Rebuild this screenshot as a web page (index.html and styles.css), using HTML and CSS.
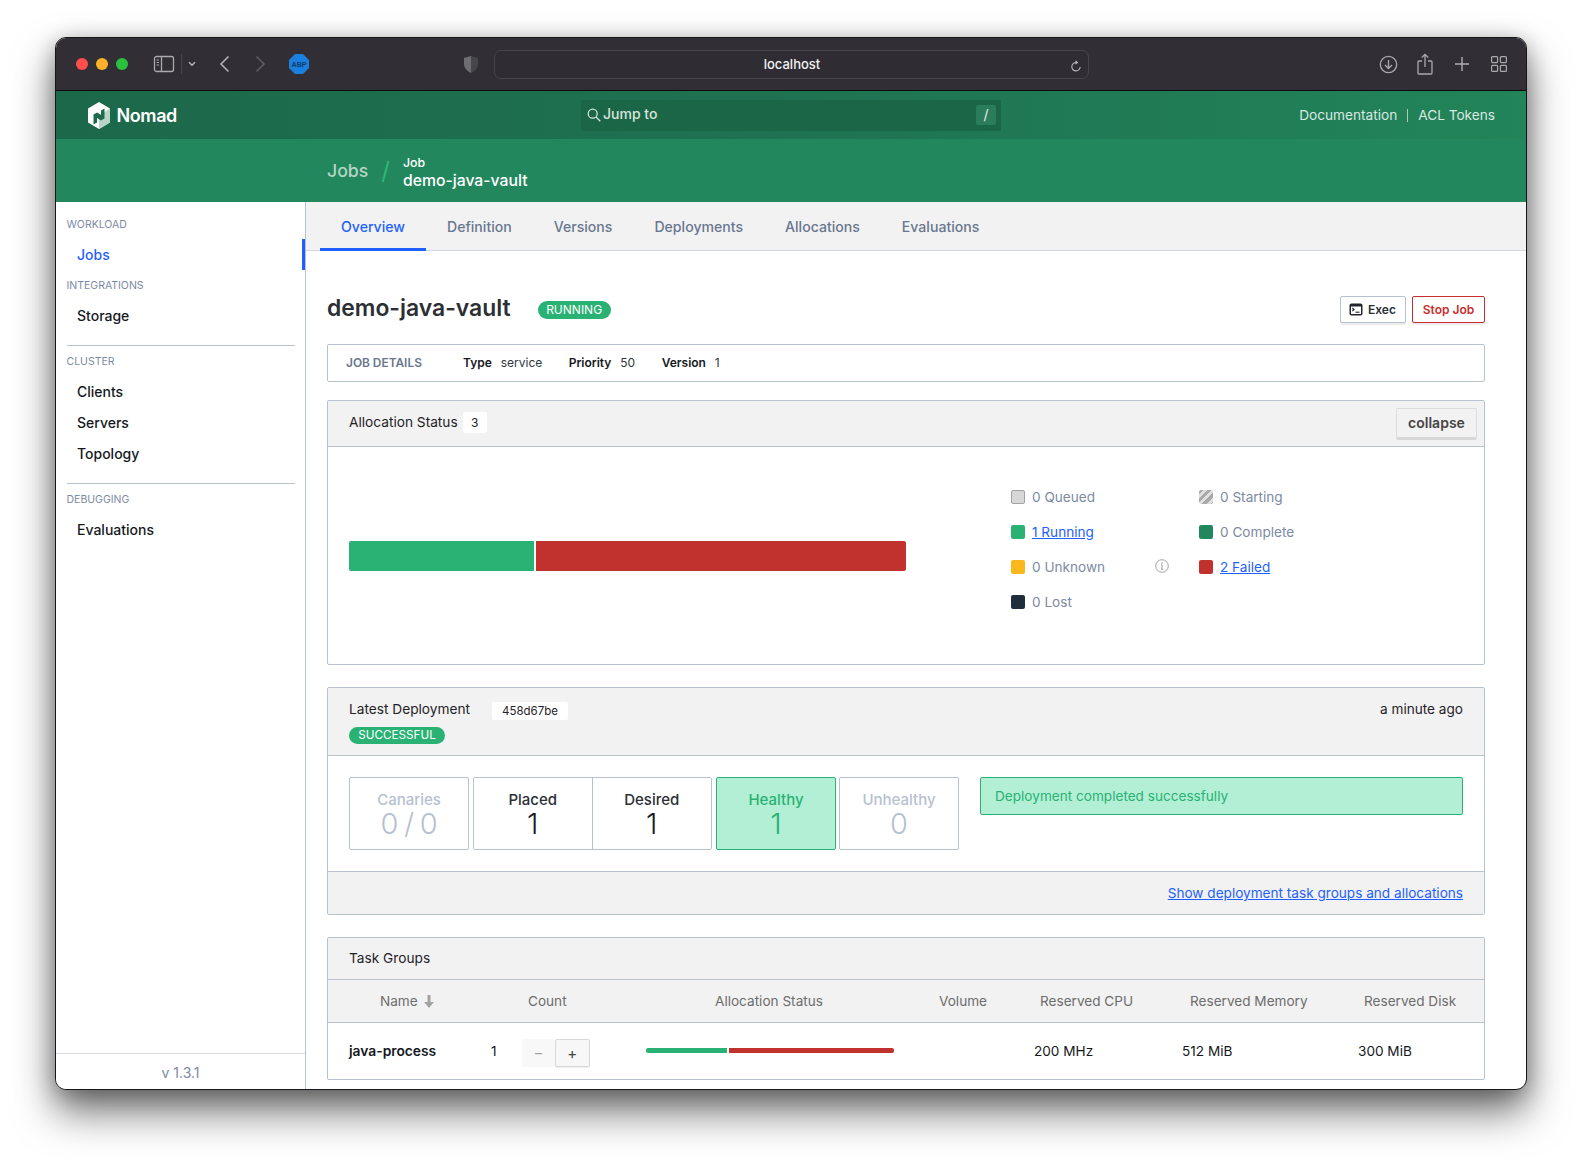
FILE: index.html
```html
<!DOCTYPE html>
<html lang="en">
<head>
<meta charset="utf-8">
<title>demo-java-vault - Nomad</title>
<link rel="stylesheet" href="styles.css">
</head>
<body>
<div class="window">
  <header class="toolbar">
    <span class="light red"></span><span class="light amber"></span><span class="light green"></span>
    <svg class="ic ic-side" width="22" height="18" viewBox="0 0 22 18" fill="none" stroke="#a9a9ad" stroke-width="1.3"><rect x="1.5" y="1.5" width="19" height="15" rx="2"/><path d="M8.5 1.5v15"/><path d="M3.6 5h2.4M3.6 7.5h2.4M3.6 10h2.4" stroke-width="1"/></svg>
    <span class="tb-sep"></span>
    <svg class="ic ic-chev" width="8" height="6" viewBox="0 0 8 6" fill="none" stroke="#b5b5b8" stroke-width="1.5"><path d="M1 1.2l3 3 3-3"/></svg>
    <svg class="ic ic-back" width="11" height="18" viewBox="0 0 11 18" fill="none" stroke="#b0b0b3" stroke-width="1.6"><path d="M9.5 1.5L2 9l7.5 7.5"/></svg>
    <svg class="ic ic-fwd" width="11" height="18" viewBox="0 0 11 18" fill="none" stroke="#5c5c60" stroke-width="1.6"><path d="M1.5 1.5L9 9l-7.5 7.5"/></svg>
    <svg class="ic ic-abp" width="20" height="20" viewBox="0 0 20 20"><path d="M6 0h8l6 6v8l-6 6H6l-6-6V6z" fill="#1b7fe0"/><text x="10" y="13" text-anchor="middle" class="abp">ABP</text></svg>
    <svg class="ic ic-shield" width="14" height="17" viewBox="0 0 14 17"><path d="M7 0l7 2v6c0 4-3 7-7 9-4-2-7-5-7-9V2z" fill="#46464b"/><path d="M7 0v17c-4-2-7-5-7-9V2z" fill="#6d6d72"/></svg>
    <div class="addr">
      <span class="addr-text">localhost</span>
      <svg class="reload" width="12" height="13" viewBox="0 0 12 13" fill="none" stroke="#bdbdc0" stroke-width="1.1"><path d="M6.6 2.5A4.2 4.2 0 1 0 10.2 7"/><path d="M5.6.8l1.8 1.7-1.8 1.7" /></svg>
    </div>
    <svg class="ic ic-dl" width="19" height="19" viewBox="0 0 19 19" fill="none" stroke="#a9a9ad" stroke-width="1.3"><circle cx="9.5" cy="9.5" r="8.2"/><path d="M9.5 5v8.5M6 10l3.5 3.5L13 10"/></svg>
    <svg class="ic ic-share" width="16" height="22" viewBox="0 0 16 22" fill="none" stroke="#a9a9ad" stroke-width="1.3"><path d="M5 8H2a1 1 0 0 0-1 1v11a1 1 0 0 0 1 1h12a1 1 0 0 0 1-1V9a1 1 0 0 0-1-1h-3"/><path d="M8 14V1.500M4.800 4.500L8 1.300l3.200 3.200"/></svg>
    <svg class="ic ic-plus" width="14" height="14" viewBox="0 0 14 14" fill="none" stroke="#b0b0b3" stroke-width="1.4"><path d="M7 0v14M0 7h14"/></svg>
    <svg class="ic ic-tabs" width="16" height="16" viewBox="0 0 16 16" fill="none" stroke="#a9a9ad" stroke-width="1.2"><rect x=".6" y=".6" width="6" height="6" rx="1"/><rect x="9.400" y=".6" width="6" height="6" rx="1"/><rect x=".6" y="9.400" width="6" height="6" rx="1"/><rect x="9.400" y="9.400" width="6" height="6" rx="1"/></svg>
  </header>

  <nav class="gnav">
    <svg class="logo" width="24" height="27" viewBox="0 0 24 27"><path d="M12 0l11 6.500v14L12 27 1 20.500v-14z" fill="#fff"/><path d="M12 13.500l11-7v14L12 27z" fill="#b7d5c6"/><path d="M6.500 12.500l3.700-2.100 3.800 2.600V8.500l3.500-2v10l-3.600 2.100-3.800-2.700v4.600l-3.600 2z" fill="#1d6a4b"/></svg>
    <span class="brand">Nomad</span>
    <div class="search">
      <svg width="14" height="14" viewBox="0 0 14 14" fill="none" stroke="#d3e2da" stroke-width="1.300"><circle cx="5.700" cy="5.700" r="4.500"/><path d="M9 9l4.300 4.300"/></svg>
      <span class="search-text">Jump to</span>
      <span class="key">/</span>
    </div>
    <div class="gnav-links">
      <a class="gnav-link">Documentation</a>
      <a class="gnav-link gnav-link-last">ACL Tokens</a>
    </div>
  </nav>

  <div class="subnav">
    <span class="crumb-root">Jobs</span>
    <span class="crumb-sep">/</span>
    <div class="crumb-job">
      <span class="crumb-label">Job</span>
      <span class="crumb-name">demo-java-vault</span>
    </div>
  </div>

  <div class="body">
    <aside class="sidebar">
      <div class="side-top">
        <p class="side-label side-label-first">WORKLOAD</p>
        <a class="side-item active">Jobs</a>
        <p class="side-label">INTEGRATIONS</p>
        <a class="side-item">Storage</a>
        <hr class="side-rule">
        <p class="side-label">CLUSTER</p>
        <a class="side-item">Clients</a>
        <a class="side-item">Servers</a>
        <a class="side-item">Topology</a>
        <hr class="side-rule">
        <p class="side-label">DEBUGGING</p>
        <a class="side-item">Evaluations</a>
      </div>
      <div class="version">v 1.3.1</div>
    </aside>

    <main class="main">
      <div class="tabs">
        <a class="tab tab-active">Overview</a>
        <a class="tab">Definition</a>
        <a class="tab">Versions</a>
        <a class="tab">Deployments</a>
        <a class="tab">Allocations</a>
        <a class="tab">Evaluations</a>
      </div>
      <section class="content">
        <div class="title-row">
          <h1 class="title">demo-java-vault</h1>
          <span class="pill pill-running">RUNNING</span>
          <div class="actions">
            <button class="btn btn-exec">
              <svg width="14" height="13" viewBox="0 0 14 13"><rect x=".5" y=".5" width="13" height="12" rx="2" fill="#22262c"/><rect x="2" y="3.500" width="10" height="7.500" fill="#fff"/><path d="M3.300 5l1.800 1.500-1.800 1.500" fill="none" stroke="#22262c" stroke-width="1.100"/><path d="M6.500 9.200h4" stroke="#22262c" stroke-width="1.100"/></svg>
              Exec
            </button>
            <button class="btn btn-stop">Stop Job</button>
          </div>
        </div>

        <div class="details">
          <span class="details-head">JOB DETAILS</span>
          <span class="pair"><b>Type</b> service</span>
          <span class="pair"><b>Priority</b> 50</span>
          <span class="pair"><b>Version</b> 1</span>
        </div>

        <div class="box box-alloc">
          <div class="box-head head-alloc">
            <span class="head-text">Allocation Status</span>
            <span class="chip chip-count">3</span>
            <button class="collapse">collapse</button>
          </div>
          <div class="alloc-body">
            <div class="bar">
              <span class="bar-seg seg-run"></span>
              <span class="bar-seg seg-fail"></span>
            </div>
            <div class="legend">
              <div class="lg"><i class="sw sw-queued"></i>0 Queued</div>
              <div class="lg"><i class="sw sw-start"></i>0 Starting</div>
              <div class="lg"><i class="sw sw-run"></i><a class="link">1 Running</a></div>
              <div class="lg"><i class="sw sw-comp"></i>0 Complete</div>
              <div class="lg lg-info"><i class="sw sw-unk"></i>0 Unknown
                <svg class="info" width="14" height="14" viewBox="0 0 14 14" fill="none" stroke="#a3a3a3"><circle cx="7" cy="7" r="6.300"/><path d="M7 6v4.200M5.800 10.300h2.400M6 6h1" /><path d="M7 3.500v1.200" stroke-width="1.400"/></svg>
              </div>
              <div class="lg"><i class="sw sw-fail"></i><a class="link">2 Failed</a></div>
              <div class="lg"><i class="sw sw-lost"></i>0 Lost</div>
            </div>
          </div>
        </div>

        <div class="box box-deploy">
          <div class="box-head head-deploy">
            <div class="deploy-line">
              <span class="head-title">Latest Deployment</span>
              <span class="chip chip-hash">458d67be</span>
              <span class="ago">a minute ago</span>
            </div>
            <span class="pill pill-success">SUCCESSFUL</span>
          </div>
          <div class="deploy-body">
            <div class="stat stat-muted"><span class="stat-k">Canaries</span><span class="stat-v stat-v-pair">0 / 0</span></div>
            <div class="stat-group">
              <div class="stat stat-inner"><span class="stat-k">Placed</span><span class="stat-v">1</span></div>
              <div class="stat stat-inner stat-inner-last"><span class="stat-k">Desired</span><span class="stat-v">1</span></div>
            </div>
            <div class="stat stat-ok"><span class="stat-k">Healthy</span><span class="stat-v">1</span></div>
            <div class="stat stat-muted"><span class="stat-k">Unhealthy</span><span class="stat-v">0</span></div>
            <div class="notice">Deployment completed successfully</div>
          </div>
          <div class="deploy-foot"><a class="link">Show deployment task groups and allocations</a></div>
        </div>

        <div class="box box-tasks">
          <div class="box-head head-tasks">Task Groups</div>
          <div class="thead">
            <span class="th-name">Name
              <svg width="10" height="13" viewBox="0 0 10 13"><path d="M3.500 0h3v7H10l-5 6-5-6h3.500z" fill="#a3a3a3"/></svg>
            </span>
            <span>Count</span>
            <span>Allocation Status</span>
            <span>Volume</span>
            <span>Reserved CPU</span>
            <span>Reserved Memory</span>
            <span>Reserved Disk</span>
          </div>
          <div class="trow">
            <b class="td-name">java-process</b>
            <span>1</span>
            <div class="stepper"><span class="step step-off">−</span><span class="step step-on">+</span></div>
            <div class="mini"><span class="mini-seg seg-run"></span><span class="mini-seg seg-fail"></span></div>
            <span>200 MHz</span>
            <span>512 MiB</span>
            <span>300 MiB</span>
          </div>
        </div>
      </section>
    </main>
  </div>
</div>
</body>
</html>
```
FILE: styles.css
```css
* { box-sizing: border-box; }
html, body { margin: 0; padding: 0; height: 1163px; overflow: hidden; background: #fff; }
body { font-family: Inter, "Liberation Sans", sans-serif; font-size: 13.6px; color: #1f2328; }

.window {
  width: 1472px; height: 1053px; margin: 37px 0 0 55px;
  border: 1px solid #16161a; border-radius: 11px; overflow: hidden; background: #fff;
  display: flex; flex-direction: column;
  box-shadow: 0 22px 40px rgba(0,0,0,.55), 0 4px 22px rgba(0,0,0,.28);
}

.toolbar {
  height: 53px; flex: none; background: #312f35; border-bottom: 1px solid #0c0c0e;
  display: flex; align-items: center; padding-left: 20px;
}
.light { width: 12px; height: 12px; border-radius: 50%; margin-right: 8px; }
.light.red { background: #ff4f4c; }
.light.amber { background: #fdb02a; }
.light.green { background: #2ac23c; }
.ic { flex: none; }
.ic-side { margin-left: 17px; }
.tb-sep { width: 1px; height: 20px; background: #48484c; margin-left: 6px; }
.ic-chev { margin-left: 6px; }
.ic-back { margin-left: 23px; }
.ic-fwd { margin-left: 25px; }
.ic-abp { margin-left: 23px; }
.abp { font: 700 7px "Liberation Sans", sans-serif; fill: #123a66; }
.ic-shield { margin-left: 155px; }
.addr {
  width: 595px; height: 29px; margin-left: 16px; border: 1px solid #47474b; border-radius: 7px;
  display: flex; align-items: center; justify-content: center; position: relative; background: #2f2d33;
}
.addr-text { color: #f1f1f2; font-size: 13px; font-weight: 500; margin-left: 1px; }
.reload { position: absolute; right: 6px; top: 9px; }
.ic-dl { margin-left: 290px; }
.ic-share { margin-left: 19px; }
.ic-plus { margin-left: 22px; }
.ic-tabs { margin-left: 22px; }

.gnav {
  height: 48px; flex: none; display: flex; align-items: center; padding-left: 30.500px;
  background: linear-gradient(90deg, #1c684a 0%, #1e7151 45%, #228459 100%);
}
.logo { flex: none; }
.brand { color: #fff; font-size: 18px; font-weight: 600; margin-left: 6px; width: 464.500px; letter-spacing: -.4px; }
.search {
  width: 420px; height: 31px; background: #1b6647; display: flex; align-items: center;
  padding: 0 5px 0 6px; color: #d7e5de;
}
.search-text { font-size: 14px; font-weight: 500; margin: 0 0 3px 2px; flex: 1; }
.key { width: 20px; height: 20px; background: #2a7c5b; color: #e6efea; font-size: 14px; text-align: center; line-height: 20px; border-radius: 2px; }
.gnav-links { margin-left: auto; padding-right: 31px; display: flex; align-items: center; }
.gnav-link { color: #d9e8e0; font-size: 13.650px; padding-right: 10px; border-right: 1px solid #a8cbb9; line-height: 13px; }
.gnav-link-last { border: 0; padding: 0 0 0 10px; }

.subnav {
  height: 63px; flex: none; background: #22875d; display: flex; align-items: center; padding-left: 271px; color: #fff;
}
.crumb-root { color: #b5d6c5; font-size: 17.700px; font-weight: 500; }
.crumb-sep { color: #2cb878; font-size: 24px; margin: 0 13px; }
.crumb-job { display: flex; flex-direction: column; padding-top: 5px; }
.crumb-label { font-size: 12.300px; font-weight: 500; line-height: 15px; }
.crumb-name { font-size: 15.750px; font-weight: 500; line-height: 21px; }

.body { flex: 1; display: flex; min-height: 0; }
.sidebar {
  width: 250px; flex: none; border-right: 1px solid #b8c1cf; display: flex; flex-direction: column; background: #fff;
}
.side-top { flex: 1; padding-left: 10.500px; }
.side-label { margin: 8px 0 0; color: #7c8ba3; font-size: 10.500px; height: 15px; line-height: 15px; }
.side-label-first { margin-top: 15px; }
.side-item { display: block; height: 31px; line-height: 31px; padding-left: 10.500px; font-size: 14px; font-weight: 500; color: #15191e; }
.side-label + .side-item { margin-top: 7px; }
.side-item.active { color: #1f5fff; position: relative; }
.side-item.active::after { content: ""; position: absolute; right: 0; top: 0; width: 3px; height: 31px; background: #1f5fff; }
.side-rule { border: 0; border-top: 1px solid #b8c1cf; height: 0; margin: 14px 10px 0 0; }
.version { height: 36px; border-top: 1px solid #d8dae3; text-align: center; color: #7c8ba3; font-size: 14px; line-height: 37px; }

.main { flex: 1; min-width: 0; display: flex; flex-direction: column; }
.tabs { height: 49px; flex: none; background: #f2f2f2; border-bottom: 1px solid #d2d6dd; display: flex; padding-left: 14px; }
.tab { height: 49px; padding: 0 21px; line-height: 49px; color: #69778f; font-size: 14.100px; font-weight: 500; }
.tab-active { color: #1f5fff; border-bottom: 3px solid #1f5fff; }

.content { padding: 0 41px 0 21px; }
.title-row { height: 93px; display: flex; align-items: center; padding-top: 20px; }
.title { margin: 0; font-size: 22.900px; font-weight: 600; color: #2c2f33; line-height: 30px; }
.pill { display: inline-block; border-radius: 10px; color: #fff; font-size: 12px; background: #29b273; }
.pill-running { margin: 4px 0 0 27px; padding: 0 8.500px; height: 18px; line-height: 18px; }
.actions { margin: 4px 0 0 auto; display: flex; gap: 6px; }
.btn {
  height: 27px; background: #fff; font: 600 12px Inter, sans-serif; border-radius: 2px; display: flex; align-items: center; padding: 0 8px;
  box-shadow: 0 2px 0 rgba(0,0,0,.08);
}
.btn-exec { width: 66px; border: 1px solid #b8c1cf; color: #2a2f36; gap: 5px; }
.btn-stop { width: 73px; border: 1px solid #c62f2e; color: #c62f2e; justify-content: center; padding: 0; }

.details {
  height: 38px; border: 1px solid #b8c1cf; border-radius: 2px; display: flex; align-items: center; padding: 0 0 1px 18px; font-size: 12px; color: #2f353c;
}
.details-head { color: #69778f; font-weight: 600; width: 117px; font-size: 11.900px; }
.pair { margin-right: 26.500px; }
.pair b { font-weight: 600; margin-right: 5.500px; color: #15191e; }

.box { border: 1px solid #b8c1cf; border-radius: 2px; overflow: hidden; }
.box-head { background: #f2f2f2; border-bottom: 1px solid #b8c1cf; padding-left: 21px; }
.box-alloc { margin-top: 18px; height: 265px; }
.head-alloc { height: 46px; display: flex; align-items: center; padding-right: 7px; }
.head-text { margin-bottom: 3px; font-size: 13.700px; }
.head-title { font-size: 13.700px; }
.chip { background: #fff; border-radius: 2px; text-align: center; font-size: 12px; }
.chip-count { width: 24px; height: 21px; line-height: 21px; margin: 0 0 3px 5px; }
.collapse {
  margin-left: auto; width: 81px; height: 32px; background: #f2f2f2; border: 1px solid #dcdcdc; border-bottom: 3px solid #d8d8d8; border-radius: 2px;
  font: 600 14px Inter, sans-serif; color: #444;
}
.alloc-body { position: relative; height: 217px; padding: 94px 0 0 21px; }
.bar { width: 557px; height: 30px; display: flex; gap: 2px; }
.bar-seg { display: block; height: 100%; }
.seg-run { background: #29b273; }
.seg-fail { background: #c1312e; }
.bar .seg-run { width: 185px; border-radius: 2px 0 0 2px; }
.bar .seg-fail { flex: 1; border-radius: 0 2px 2px 0; }
.legend {
  position: absolute; left: 683px; top: 32px; width: 340px;
  display: grid; grid-template-columns: 188px 1fr; grid-auto-rows: 35px; color: #7c8ba3; font-size: 13.600px;
}
.lg { display: flex; align-items: center; position: relative; height: 35px; }
.sw { width: 14px; height: 14px; border-radius: 2px; margin-right: 7px; flex: none; }
.sw-queued { background: #d7d7d7; border: 1px solid #a3a3a3; }
.sw-start { background: repeating-linear-gradient(135deg, #a8a8a8 0 3px, #dedede 3px 6px); }
.sw-run { background: #29b273; }
.sw-comp { background: #22875d; }
.sw-unk { background: #fbb81d; }
.sw-fail { background: #c1312e; }
.sw-lost { background: #1f2d3d; }
.info { position: absolute; left: 144px; top: 10px; }
.link { color: #1f5fff; text-decoration: underline; }

.box-deploy { margin-top: 22px; height: 228px; }
.head-deploy { height: 68px; padding-top: 11px; padding-right: 21px; }
.deploy-line { display: flex; align-items: center; height: 19px; }
.chip-hash { width: 76px; height: 18px; line-height: 18px; margin-left: 22px; margin-top: 5px; font-size: 11.500px; }
.ago { margin-left: auto; }
.pill-success { display: block; width: 96px; height: 17px; line-height: 17px; text-align: center; margin-top: 9px; font-size: 11.700px; }
.deploy-body { height: 115px; padding: 21px 21px 0; display: flex; align-items: flex-start; }
.stat {
  width: 120px; height: 73px; border: 1px solid #b8c1cf; border-radius: 2px; margin-right: 4px; background: #fff;
  display: flex; flex-direction: column; align-items: center; padding-top: 14px; color: #2a2f36;
}
.stat-k { font-size: 15px; font-weight: 500; line-height: 16px; }
.stat-v { font-size: 29px; font-weight: 300; line-height: 31px; color: #15191e; }
.stat-v-pair { word-spacing: -2.500px; }
.stat-muted .stat-k, .stat-muted .stat-v { color: #b6c0d0; }
.stat-group { display: flex; border: 1px solid #b8c1cf; border-radius: 2px; margin-right: 4px; height: 73px; }
.stat-inner { border: 0; border-right: 1px solid #b8c1cf; border-radius: 0; margin: 0; width: 118.500px; height: 71px; padding-top: 14px; }
.stat-inner-last { border-right: 0; }
.stat-ok { background: #b2efd5; border-color: #29b273; margin-right: 3px; }
.stat-ok .stat-k, .stat-ok .stat-v { color: #29b273; }
.notice {
  margin-left: 17px; flex: 1; height: 38px; background: #b2efd5; border: 1px solid #29b273; border-radius: 2px;
  color: #29b273; padding-left: 14px; line-height: 37px;
}
.deploy-foot { height: 43px; background: #f2f2f2; border-top: 1px solid #b8c1cf; text-align: right; padding-right: 21px; line-height: 43px; }

.box-tasks { margin-top: 22px; height: 143px; }
.head-tasks { height: 42px; line-height: 40px; font-size: 13.700px; }
.thead {
  height: 43px; background: #f2f2f2; border-bottom: 1px solid #b8c1cf; color: #6d6d6d;
  display: grid; align-items: center; grid-template-columns: 148px 187px 224px 101px 150px 174px 1fr; padding: 0 0 0 52px;
}
.th-name { display: flex; align-items: center; gap: 6px; }
.trow {
  height: 56px; display: grid; align-items: center; grid-template-columns: 142px 31px 124px 388px 148px 176px 1fr; padding: 0 0 0 21px; color: #15191e;
}
.td-name { font-weight: 600; font-size: 13.800px; }
.stepper { display: flex; height: 28px; margin-top: 3px; }
.step { width: 34.500px; height: 28px; text-align: center; line-height: 27px; border-radius: 2px; font-size: 15px; }
.step-off { background: #f8f8f8; color: #a3a3a3; width: 33px; }
.step-on { border: 1px solid #d8d8d8; background: #f7f7f7; color: #444; box-shadow: 0 1px 0 rgba(0,0,0,.06); }
.mini { width: 248px; height: 5px; display: flex; gap: 2px; margin-top: -1px; }
.mini-seg { display: block; height: 100%; }
.mini .seg-run { width: 81px; border-radius: 2px 0 0 2px; }
.mini .seg-fail { flex: 1; border-radius: 0 2px 2px 0; }
```
